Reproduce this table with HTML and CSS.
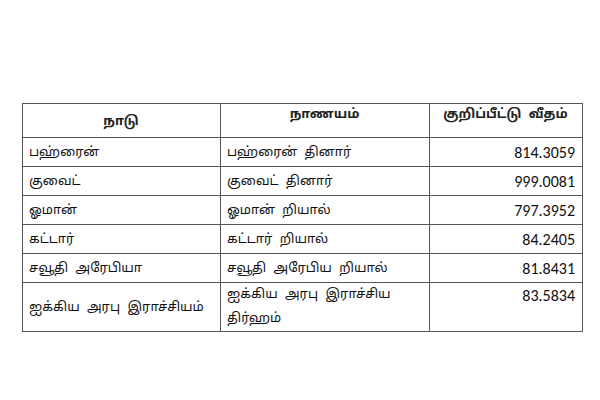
FILE: index.html
```html
<!DOCTYPE html>
<html lang="ta">
<head>
<meta charset="utf-8">
<link rel="stylesheet" href="styles.css">
</head>
<body>
<div class="page">
<table class="rates">
<colgroup>
<col class="c1"><col class="c2"><col class="c3">
</colgroup>
<thead>
<tr class="head">
<th class="mid">நாடு</th>
<th class="top">நாணயம்</th>
<th class="top">குறிப்பீட்டு வீதம்</th>
</tr>
</thead>
<tbody>
<tr><td>பஹ்ரைன்</td><td>பஹ்ரைன் தினார்</td><td class="num">814.3059</td></tr>
<tr><td>குவைட்</td><td>குவைட் தினார்</td><td class="num">999.0081</td></tr>
<tr><td>ஓமான்</td><td>ஓமான் றியால்</td><td class="num">797.3952</td></tr>
<tr><td>கட்டார்</td><td>கட்டார் றியால்</td><td class="num">84.2405</td></tr>
<tr><td>சவூதி அரேபியா</td><td>சவூதி அரேபிய றியால்</td><td class="num">81.8431</td></tr>
<tr class="last"><td class="nowrap">ஐக்கிய அரபு இராச்சியம்</td><td class="top two">ஐக்கிய அரபு இராச்சிய<br>திர்ஹம்</td><td class="top num">83.5834</td></tr>
</tbody>
</table>
</div>
</body>
</html>
```
FILE: styles.css
```css
html, body {
  margin: 0;
  background: #ffffff;
}
.page {
  padding: 103px 0 0 22px;
}
.rates {
  border-collapse: collapse;
  width: 561px;
  table-layout: fixed;
  font-family: "Noto Sans Tamil", "Lohit Tamil", "Latha", "Liberation Sans", sans-serif;
  font-size: 13px;
  word-spacing: 4px;
  color: #111;
}
.c1 { width: 198px; }
.c2 { width: 209px; }
.c3 { width: 153px; }
.rates th, .rates td {
  border: 1px solid #555;
  padding: 2px 7px 0 6px;
  height: 26px;
  line-height: 20px;
  text-align: left;
  vertical-align: middle;
  font-weight: normal;
}
.rates .nowrap {
  white-space: nowrap;
}
.rates .head th {
  height: 31px;
  text-align: center;
  font-size: 13px;
  font-weight: bold;
  color: #222;
}
.rates th.top, .rates td.top {
  vertical-align: top;
  padding-top: 1px;
}
.rates td.top {
  padding-top: 3px;
}
.rates td.two {
  line-height: 24px;
  padding-top: 0;
}
.rates .last td {
  height: 37px;
}
.rates td.num {
  text-align: right;
  font-family: "Carlito", "Lato", "Open Sans", sans-serif;
  font-size: 16px;
  word-spacing: 0;
  padding-right: 7px;
}
```
